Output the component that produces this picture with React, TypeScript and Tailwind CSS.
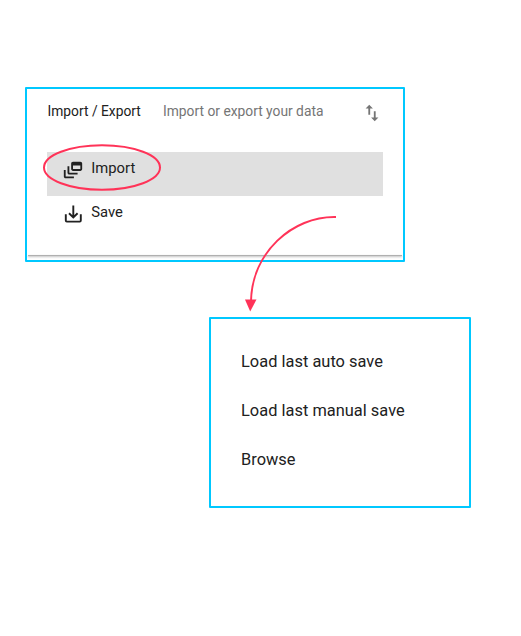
import { MdImportExport } from "react-icons/md";

function FeedIcon() {
  return (
    <svg viewBox="0 0 24 24" className="size-[22px] shrink-0" fill="currentColor">
      <path d="M8 8H6v7c0 1.1.9 2 2 2h9v-2H8V8z" />
      <path d="M20 3h-8c-1.1 0-2 .9-2 2v6c0 1.1.9 2 2 2h8c1.1 0 2-.9 2-2V5c0-1.1-.9-2-2-2zm0 8h-8V7h8v4z" />
      <path d="M4 12H2v7c0 1.1.9 2 2 2h9v-2H4v-7z" />
    </svg>
  );
}

function SaveIcon() {
  return (
    <svg viewBox="0 0 22 22" className="size-[22px] shrink-0" fill="none" stroke="currentColor" strokeWidth="1.9">
      <path d="M3.8 11.2V17.6Q3.8 18.6 4.8 18.6H17.8Q18.8 18.6 18.8 17.6V11.2" />
      <path d="M11.3 2.4V14M7 10.2L11.3 14.4L15.6 10.2" />
    </svg>
  );
}

const options = ["Load last auto save", "Load last manual save", "Browse"];

export default function App() {
  return (
    <main className="relative h-[636px] w-[521px] overflow-hidden bg-white pt-[87px] pl-[25px] font-['Roboto',sans-serif] text-[#212121]">
      <section className="flex h-[175px] w-[380px] flex-col rounded-[1px] border-2 border-[#00c8ff]">
        <header className="flex h-[63px] items-start pt-[11.5px] pl-[20.5px] text-[13.8px] leading-5">
          <h1 className="w-[115.5px] whitespace-nowrap">Import / Export</h1>
          <p className="w-[198px] whitespace-nowrap text-[#757575]">Import or export your data</p>
          <MdImportExport className="mt-px size-[22px] text-[#757575]" />
        </header>
        <div className="ml-[20.4px] flex h-11 w-[335.3px] items-start bg-[#e0e0e0] pt-[5px] pl-[14.5px] text-[14.8px] leading-[22px]">
          <div className="w-[29.4px] pt-0.5"><FeedIcon /></div>
          <span>Import</span>
        </div>
        <div className="ml-[20.4px] flex h-11 w-[335.3px] items-start pt-[5px] pl-[14.5px] text-[14.8px] leading-[22px]">
          <div className="w-[29.4px] pt-0.5"><SaveIcon /></div>
          <span>Save</span>
        </div>
        <div className="mx-px mt-[15px] h-px bg-[#b0b0b0] shadow-[0_1px_2px_#aaa]" />
      </section>
      <section className="mt-[55px] ml-[184px] flex h-[191px] w-[262px] flex-col rounded-[1px] border-2 border-[#00c8ff] pt-[18.4px] pl-[30px] text-[16.4px]">
        {options.map((option) => (
          <div key={option} className="flex h-[49.3px] items-center whitespace-nowrap tracking-[0.02px]">
            {option}
          </div>
        ))}
      </section>
      <svg className="pointer-events-none absolute inset-0" width="521" height="636" fill="none" stroke="#ff3358" strokeWidth="2">
        <ellipse cx="102" cy="167.5" rx="58" ry="22.3" />
        <path d="M336 217C292 216 252 253 251 301" />
        <path d="M245 299.5H256.5L250.2 311.5Z" fill="#ff3358" stroke="none" />
      </svg>
    </main>
  );
}
